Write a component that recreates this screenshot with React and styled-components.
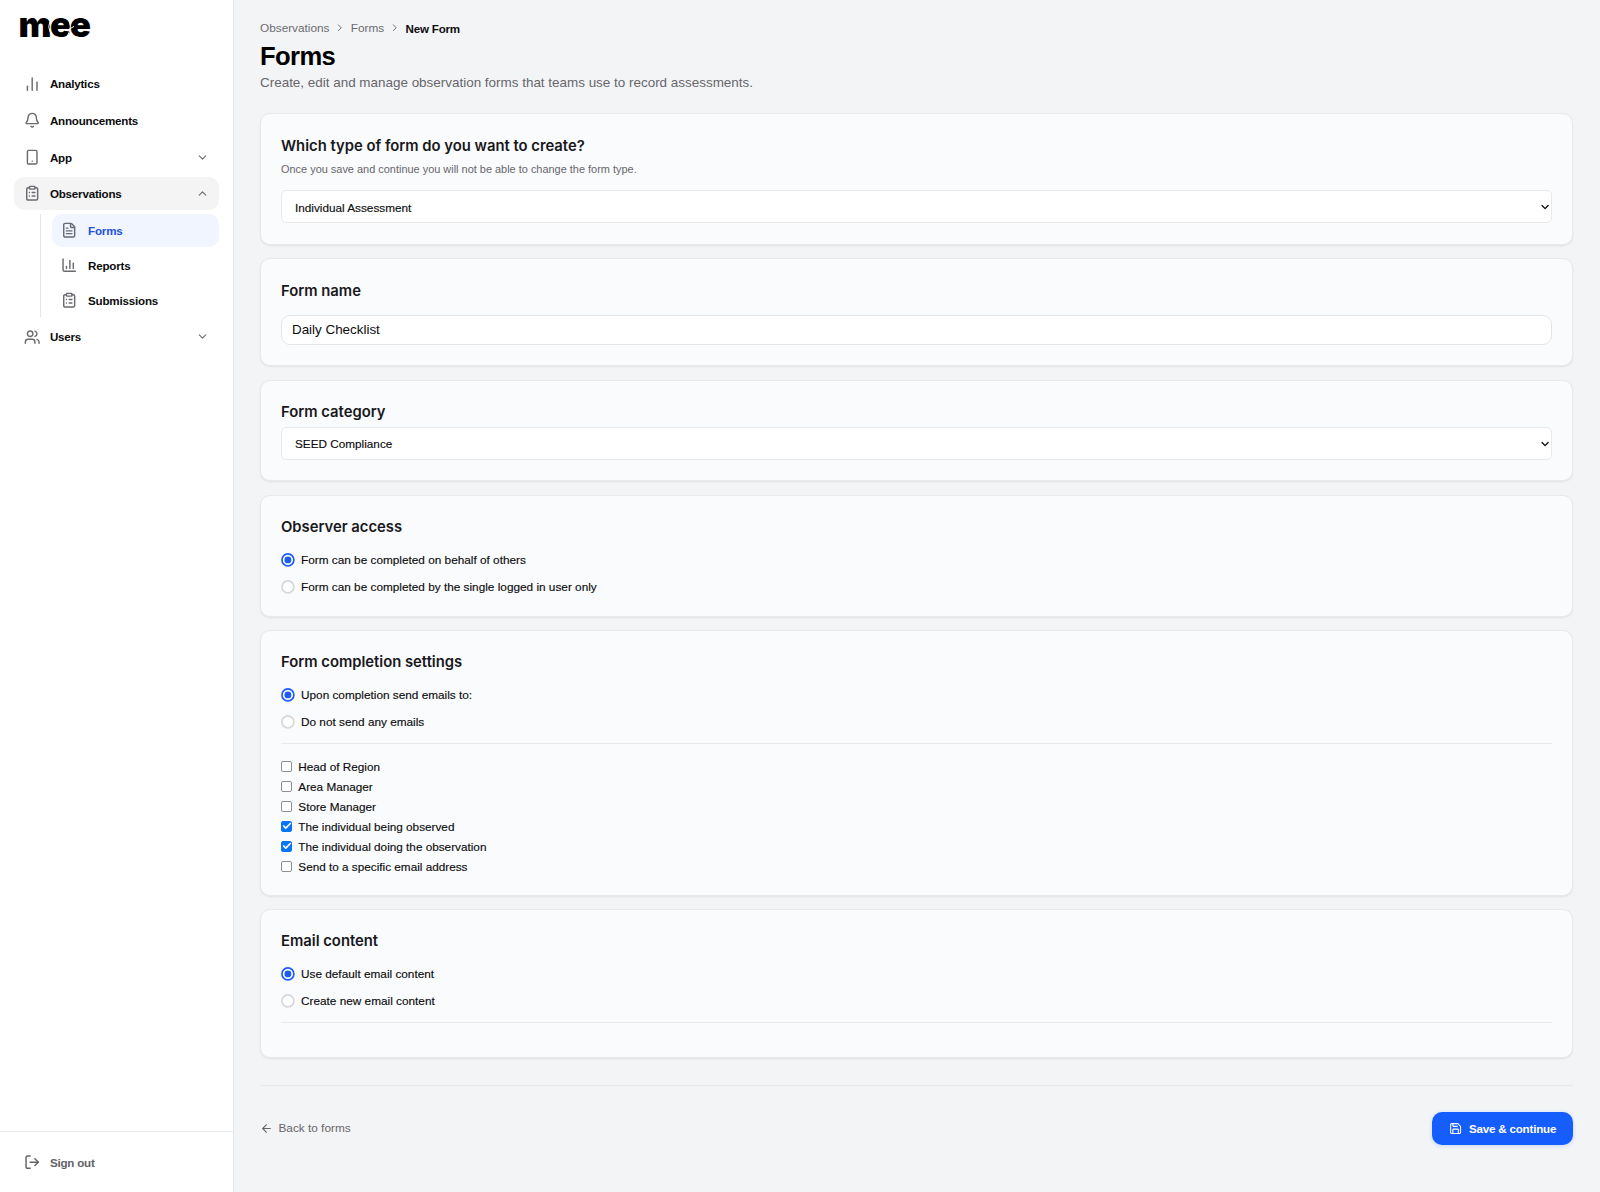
import React, { useState } from "react";
import styled, { createGlobalStyle, css } from "styled-components";
import {
  ArrowLeft,
  Bell,
  ChartColumn,
  ChartNoAxesColumn,
  Check,
  ChevronDown,
  ChevronRight,
  ChevronUp,
  ClipboardList,
  FileText,
  LogOut,
  Save,
  Smartphone,
  Users,
} from "lucide-react";

const recipients = [
  { label: "Head of Region", checked: false },
  { label: "Area Manager", checked: false },
  { label: "Store Manager", checked: false },
  { label: "The individual being observed", checked: true },
  { label: "The individual doing the observation", checked: true },
  { label: "Send to a specific email address", checked: false },
];

/* the wordmark's letters are parted by thin curved cuts */
const Logo = () => (
  <LogoSvg viewBox="0 0 90 52" aria-label="mee">
    <text x="-1.5" y="36.6" textLength="72.6">mee</text>
    <path d="M33 17 Q24.5 26.5 33 36.5" />
    <path d="M47 17 Q53.6 26.5 47 36.5" />
    <path d="M48.6 29.6 L54 26.4" />
  </LogoSvg>
);

const NavLink = ({ icon: Icon, label, active, open, hasChildren }) => {
  const Chevron = open ? ChevronUp : ChevronDown;

  return (
    <NavItem $active={active}>
      <Icon size={16.4} strokeWidth={2.1} />
      <span>{label}</span>
      {hasChildren && <Chevron className="chevron" size={13} />}
    </NavItem>
  );
};

const RadioGroup = ({ options }) => {
  const [selected, setSelected] = useState(0);

  return (
    <Radios>
      {options.map((option, i) => (
        <RadioRow key={option} onClick={() => setSelected(i)}>
          <RadioDot viewBox="0 0 14 14" $on={selected === i}>
            <circle cx="7" cy="7" r="6.05" />
            {selected === i && <circle className="dot" cx="7" cy="7" r="3.5" />}
          </RadioDot>
          {option}
        </RadioRow>
      ))}
    </Radios>
  );
};

const SelectField = ({ value, $top }) => (
  <SelectBox $top={$top}>
    {value}
    <ChevronDown size={12.2} strokeWidth={2.6} />
  </SelectBox>
);

const App = () => {
  const [sendTo, setSendTo] = useState(recipients);

  const toggle = (index) => {
    setSendTo(
      sendTo.map((r, i) => (i === index ? { ...r, checked: !r.checked } : r))
    );
  };

  return (
    <>
      <GlobalStyle />
      <Page>

        {/* SIDEBAR */}
        <Sidebar>
          <Logo />
          <Nav>
            <NavLink icon={ChartNoAxesColumn} label="Analytics" />
            <NavLink icon={Bell} label="Announcements" />
            <NavLink icon={Smartphone} label="App" hasChildren />
            <NavLink icon={ClipboardList} label="Observations" active hasChildren open />
            <SubNav>
              <SubItem $active>
                <FileText size={16.4} strokeWidth={2.1} />
                Forms
              </SubItem>
              <SubItem>
                <ChartColumn size={16.4} strokeWidth={2.1} />
                Reports
              </SubItem>
              <SubItem>
                <ClipboardList size={16.4} strokeWidth={2.1} />
                Submissions
              </SubItem>
            </SubNav>
            <NavLink icon={Users} label="Users" hasChildren />
          </Nav>
          <SignOut>
            <LogOut size={16.4} strokeWidth={2.1} />
            Sign out
          </SignOut>
        </Sidebar>

        {/* CONTENT */}
        <Main>
          <Breadcrumb>
            <span>Observations</span>
            <ChevronRight size={11.5} />
            <span>Forms</span>
            <ChevronRight size={11.5} />
            <b>New Form</b>
          </Breadcrumb>
          <Title>Forms</Title>
          <Subtitle>
            Create, edit and manage observation forms that teams use to record
            assessments.
          </Subtitle>

          <Cards>
            <Card>
              <h2>Which type of form do you want to create?</h2>
              <Hint>
                Once you save and continue you will not be able to change the
                form type.
              </Hint>
              <SelectField value="Individual Assessment" $top={13} />
            </Card>

            <Card>
              <h2>Form name</h2>
              <TextInput defaultValue="Daily Checklist" />
            </Card>

            <Card>
              <h2>Form category</h2>
              <SelectField value="SEED Compliance" $top={3.6} />
            </Card>

            <Card>
              <h2>Observer access</h2>
              <RadioGroup
                options={[
                  "Form can be completed on behalf of others",
                  "Form can be completed by the single logged in user only",
                ]}
              />
            </Card>

            <Card>
              <h2>Form completion settings</h2>
              <RadioGroup
                options={["Upon completion send emails to:", "Do not send any emails"]}
              />
              <Divider />
              <Checks>
                {sendTo.map((r, i) => (
                  <CheckRow key={r.label} onClick={() => toggle(i)}>
                    <CheckBox $on={r.checked}>
                      {r.checked && <Check size={10} strokeWidth={4} />}
                    </CheckBox>
                    {r.label}
                  </CheckRow>
                ))}
              </Checks>
            </Card>

            <Card>
              <h2>Email content</h2>
              <RadioGroup
                options={["Use default email content", "Create new email content"]}
              />
              <Divider />
            </Card>
          </Cards>

          <Footer>
            <BackLink>
              <ArrowLeft size={13} />
              Back to forms
            </BackLink>
            <SaveButton>
              <Save size={13.2} />
              Save &amp; continue
            </SaveButton>
          </Footer>
        </Main>

      </Page>
    </>
  );
};

const GlobalStyle = createGlobalStyle`
  * {
    box-sizing: border-box;
  }

  body {
    margin: 0;
    background: #f3f4f6;
    color: #0c0c0e;
    font-family: "Liberation Sans", Arial, sans-serif;
    font-size: 11.8px;
  }
`;

/* a slightly condensed bold, for labels between regular and bold */
const strong = css`
  font-size: 11.6px;
  font-weight: 700;
  letter-spacing: -0.2px;
`;

const Page = styled.div`
  display: flex;
  height: 1192px;
  overflow: hidden;
`;

const Sidebar = styled.aside`
  display: flex;
  flex-direction: column;
  flex: none;
  width: 234px;
  background: #fff;
  border-right: 1px solid #e6e7ea;
`;

const LogoSvg = styled.svg`
  flex: none;
  width: 90px;
  height: 52px;
  margin: 0 0 0 20px;
  overflow: visible;

  text {
    font-family: Inter, sans-serif;
    font-size: 35px;
    font-weight: 900;
    fill: #000;
  }

  path {
    fill: none;
    stroke: #fff;
    stroke-width: 1px;
  }
`;

const Nav = styled.nav`
  display: flex;
  flex-direction: column;
  flex: 1;
  gap: 3.3px;
  padding: 15.2px 13.7px 0;
`;

const NavItem = styled.div`
  display: flex;
  align-items: center;
  gap: 9.8px;
  height: 33.3px;
  padding: 0 10px;
  border-radius: 10px;
  background: ${(p) => (p.$active ? "#f4f4f5" : "transparent")};
  ${strong}
  cursor: pointer;

  svg {
    color: #6a6a70;
  }

  .chevron {
    margin-left: auto;
  }
`;

const SubNav = styled.div`
  display: flex;
  flex-direction: column;
  gap: 1.6px;
  margin-left: 26px;
  padding-left: 11px;
  border-left: 1px solid #e4e4e7;
`;

const SubItem = styled.div`
  display: flex;
  align-items: center;
  gap: 10.2px;
  height: 33.4px;
  padding: 0 9.8px;
  border-radius: 10px;
  background: ${(p) => (p.$active ? "#f0f5ff" : "transparent")};
  color: ${(p) => (p.$active ? "#1f4fdc" : "inherit")};
  ${strong}
  cursor: pointer;

  svg {
    color: #6a6a70;
  }
`;

const SignOut = styled.div`
  display: flex;
  align-items: center;
  gap: 9.8px;
  height: 61px;
  padding-left: 23.7px;
  border-top: 1px solid #e9eaec;
  color: #626268;
  ${strong}
`;

const Main = styled.main`
  flex: 1;
  padding: 20.1px 27px 0 26px;
`;

const Breadcrumb = styled.div`
  display: flex;
  align-items: center;
  gap: 4.9px;
  height: 16px;
  color: #6b6b70;

  b {
    color: #0c0c0e;
    ${strong}
  }
`;

const Title = styled.h1`
  margin: 4.2px 0 0;
  color: #000;
  font-size: 25.6px;
  letter-spacing: -0.6px;
  line-height: 32px;
`;

const Subtitle = styled.p`
  margin: 1.2px 0 0;
  color: #66666b;
  font-size: 13.45px;
  line-height: 20px;
`;

const Cards = styled.div`
  display: flex;
  flex-direction: column;
  gap: 13.7px;
  margin-top: 20px;
`;

const Card = styled.section`
  padding: 20.2px 20px;
  border: 1px solid #e8e9ec;
  border-radius: 10px;
  background: #fafbfd;
  box-shadow: 0 1px 2px rgba(0, 0, 0, 0.08);

  h2 {
    margin: 0;
    color: #18181b;
    font-family: Inter, sans-serif;
    font-size: 14.8px;
    font-weight: 600;
    line-height: 22.4px;
  }
`;

const Hint = styled.p`
  margin: 4.2px 0 0;
  color: #66666b;
  font-size: 10.95px;
  line-height: 16px;
`;

const SelectBox = styled.div`
  display: flex;
  align-items: center;
  justify-content: space-between;
  height: 33.2px;
  margin-top: ${(p) => p.$top}px;
  padding: 0.6px 0 0 13px;
  border: 1px solid #e8e9eb;
  border-radius: 5px;
  background: #fff;
  font-size: 11.75px;
  -webkit-text-stroke: 0.15px currentColor;
`;

const TextInput = styled.input`
  display: block;
  width: 100%;
  height: 30px;
  margin-top: 13px;
  padding: 0 10px;
  border: 1px solid #e4e6e9;
  border-radius: 9px;
  background: #fff;
  color: inherit;
  font-family: inherit;
  font-size: 13.4px;
  outline: none;
`;

const Radios = styled.div`
  display: flex;
  flex-direction: column;
  gap: 9.7px;
  margin-top: 13px;
`;

const RadioRow = styled.label`
  display: flex;
  align-items: center;
  gap: 6.2px;
  height: 17px;
  -webkit-text-stroke: 0.15px currentColor;
`;

const RadioDot = styled.svg`
  width: 13.8px;
  height: 13.8px;

  circle {
    fill: #fff;
    stroke: ${(p) => (p.$on ? "#1c5cf5" : "#d6d7da")};
    stroke-width: 1.7px;
  }

  .dot {
    fill: #1c5cf5;
    stroke: none;
  }
`;

const Divider = styled.div`
  height: 1px;
  margin: 12.8px 0 13.6px;
  background: #e8e9ec;
`;

const Checks = styled.div`
  display: flex;
  flex-direction: column;
  gap: 3.5px;
`;

const CheckRow = styled.label`
  display: flex;
  align-items: center;
  gap: 6.3px;
  height: 16.5px;
  font-size: 11.75px;
  -webkit-text-stroke: 0.15px currentColor;
`;

const CheckBox = styled.span`
  display: flex;
  align-items: center;
  justify-content: center;
  width: 11px;
  height: 11px;
  border: 1px solid ${(p) => (p.$on ? "#0a74f7" : "#8d8d92")};
  border-radius: 2px;
  background: ${(p) => (p.$on ? "#0a74f7" : "#fff")};
  color: #fff;

  svg {
    flex: none;
  }
`;

const Footer = styled.footer`
  display: flex;
  align-items: center;
  justify-content: space-between;
  margin-top: 27px;
  padding-top: 25.6px;
  border-top: 1px solid #e7e8eb;
`;

const BackLink = styled.a`
  display: flex;
  align-items: center;
  gap: 5.5px;
  color: #66666b;
`;

const SaveButton = styled.button`
  display: flex;
  align-items: center;
  justify-content: center;
  gap: 7px;
  width: 141px;
  height: 33.4px;
  padding: 0;
  border: none;
  border-radius: 10px;
  background: #155dfc;
  box-shadow: 0 1px 4px rgba(21, 93, 252, 0.2);
  color: #fff;
  font-family: inherit;
  ${strong}
`;

export default App;
